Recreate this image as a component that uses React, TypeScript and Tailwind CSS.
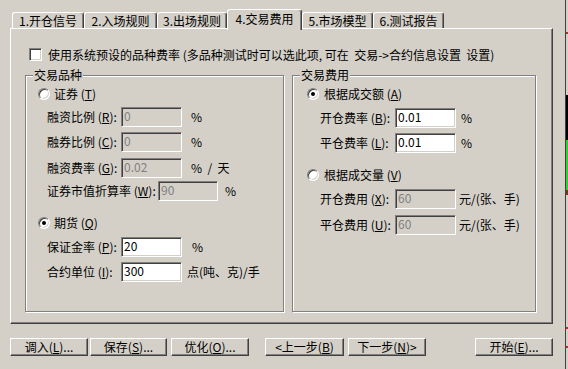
import React from "react";

const sunken =
  "border border-t-[#808080] border-l-[#808080] border-r-white border-b-white shadow-[inset_1px_1px_0_#404040,inset_-1px_-1px_0_#d4d0c8]";
const raised =
  "border border-t-white border-l-white border-r-[#404040] border-b-[#404040] shadow-[inset_-1px_-1px_0_#808080]";

function Mn({ text, k, tail = "" }: { text: string; k: string; tail?: string }) {
  return (
    <>
      {text}(<span className="underline underline-offset-[1px]">{k}</span>){tail}
    </>
  );
}

function Box({ value, disabled, w }: { value: string; disabled?: boolean; w: string }) {
  return (
    <div
      className={`${w} h-[20px] shrink-0 ${sunken} pl-[2px] pt-[1px] text-[12px] leading-[14px] ${
        disabled ? "bg-[#d4d0c8] text-[#808080]" : "bg-white text-black"
      }`}
    >
      {value}
    </div>
  );
}

function Radio({ checked }: { checked?: boolean }) {
  return (
    <div
      className={`w-[12px] h-[12px] shrink-0 rounded-full bg-white ${sunken} flex items-center justify-center`}
    >
      {checked && <div className="w-[4px] h-[4px] rounded-full bg-black" />}
    </div>
  );
}

function GroupTitle({ children }: { children: React.ReactNode }) {
  return (
    <div className="absolute -top-[8px] left-[7px] bg-[#d4d0c8] px-[1px] text-[12px] leading-[14px]">
      {children}
    </div>
  );
}

const tabs = [
  { t: "1.开仓信号", w: "w-[72px]" },
  { t: "2.入场规则", w: "w-[73px]" },
  { t: "3.出场规则", w: "w-[70px]" },
];
const tabsAfter = [
  { t: "5.市场模型", w: "w-[71px]" },
  { t: "6.测试报告", w: "w-[71px]" },
];

const tabCls =
  "h-[16px] shrink-0 flex items-center justify-center border-t border-l border-r border-t-white border-l-white border-r-[#404040] rounded-t-[3px] shadow-[inset_-1px_0_0_#808080] text-[12px] leading-none";

function Btn({ children, w, ml }: { children: React.ReactNode; w: string; ml: string }) {
  return (
    <div
      className={`${w} ${ml} h-[18px] shrink-0 ${raised} flex items-center justify-center text-[12px] leading-none`}
    >
      {children}
    </div>
  );
}

export default function App() {
  return (
    <div className="w-[568px] h-[369px] bg-[#d4d0c8] flex overflow-hidden text-black font-['Noto_Sans_CJK_SC','Noto_Sans',sans-serif]">
      <div className="w-[565px] shrink-0 flex flex-col">
        {/* Tabs */}
        <div className="mt-[9px] ml-[12px] h-[19px] flex items-end">
          {tabs.map((tab) => (
            <div key={tab.t} className={`${tab.w} ${tabCls}`}>
              {tab.t}
            </div>
          ))}
          <div className="w-[75px] h-[21px] -mb-[2px] pb-[2px] relative z-10 bg-[#d4d0c8] shrink-0 flex items-center justify-center border-t border-l border-r border-t-white border-l-white border-r-[#404040] rounded-t-[3px] shadow-[inset_-1px_0_0_#808080] text-[12px] leading-none">
            4.交易费用
          </div>
          {tabsAfter.map((tab) => (
            <div key={tab.t} className={`${tab.w} ${tabCls}`}>
              {tab.t}
            </div>
          ))}
        </div>

        {/* Panel */}
        <div className={`ml-[10px] w-[543px] h-[296px] shrink-0 ${raised} flex flex-col`}>
          <div className="mt-[19px] ml-[18px] h-[13px] flex items-center">
            <div className={`w-[13px] h-[13px] bg-white ${sunken}`} />
            <span className="ml-[6px] text-[12px] leading-none whitespace-nowrap">
              使用系统预设的品种费率 (多品种测试时可以选此项, 可在&nbsp; 交易-&gt;合约信息设置&nbsp; 设置)
            </span>
          </div>

          <div className="mt-[14px] ml-[14px] flex gap-[8px]">
            {/* 交易品种 */}
            <div className="relative w-[259px] h-[237px] border border-[#808080] shadow-[inset_1px_1px_0_#fff,1px_1px_0_#fff] flex flex-col text-[12px]">
              <GroupTitle>交易品种</GroupTitle>
              <div className="mt-[10px] ml-[12px] h-[16px] flex items-center gap-[4px]">
                <Radio />
                <span><Mn text="证券 " k="T" /></span>
              </div>
              <div className="mt-[5px] ml-[21px] h-[20px] flex items-center">
                <span className="w-[74px]"><Mn text="融资比例 " k="R" tail=":" /></span>
                <Box w="w-[61px]" value="0" disabled />
                <span className="ml-[9px]">%</span>
              </div>
              <div className="mt-[5px] ml-[21px] h-[20px] flex items-center">
                <span className="w-[74px]"><Mn text="融券比例 " k="C" tail=":" /></span>
                <Box w="w-[61px]" value="0" disabled />
                <span className="ml-[9px]">%</span>
              </div>
              <div className="mt-[6px] ml-[21px] h-[20px] flex items-center">
                <span className="w-[74px]"><Mn text="融资费率 " k="G" tail=":" /></span>
                <Box w="w-[61px]" value="0.02" disabled />
                <span className="ml-[9px] whitespace-pre">%  /  天</span>
              </div>
              <div className="mt-[3px] ml-[21px] h-[20px] flex items-center">
                <span className="w-[111px]"><Mn text="证券市值折算率 " k="W" tail=":" /></span>
                <Box w="w-[60px]" value="90" disabled />
                <span className="ml-[7px]">%</span>
              </div>
              <div className="mt-[14px] ml-[12px] h-[16px] flex items-center gap-[4px]">
                <Radio checked />
                <span><Mn text="期货 " k="Q" /></span>
              </div>
              <div className="mt-[6px] ml-[21px] h-[20px] flex items-center">
                <span className="w-[74px]"><Mn text="保证金率 " k="P" tail=":" /></span>
                <Box w="w-[61px]" value="20" />
                <span className="ml-[10px]">%</span>
              </div>
              <div className="mt-[5px] ml-[21px] h-[20px] flex items-center">
                <span className="w-[74px]"><Mn text="合约单位 " k="I" tail=":" /></span>
                <Box w="w-[61px]" value="300" />
                <span className="ml-[5px]">点(吨、克)/手</span>
              </div>
            </div>

            {/* 交易费用 */}
            <div className="relative w-[244px] h-[237px] border border-[#808080] shadow-[inset_1px_1px_0_#fff,1px_1px_0_#fff] flex flex-col text-[12px]">
              <GroupTitle>交易费用</GroupTitle>
              <div className="mt-[10px] ml-[14px] h-[16px] flex items-center gap-[5px]">
                <Radio checked />
                <span><Mn text="根据成交额 " k="A" /></span>
              </div>
              <div className="mt-[6px] ml-[27px] h-[20px] flex items-center">
                <span className="w-[75px]"><Mn text="开仓费率 " k="B" tail=":" /></span>
                <Box w="w-[61px]" value="0.01" />
                <span className="ml-[5px]">%</span>
              </div>
              <div className="mt-[5px] ml-[27px] h-[20px] flex items-center">
                <span className="w-[75px]"><Mn text="平仓费率 " k="L" tail=":" /></span>
                <Box w="w-[61px]" value="0.01" />
                <span className="ml-[5px]">%</span>
              </div>
              <div className="mt-[14px] ml-[14px] h-[16px] flex items-center gap-[5px]">
                <Radio />
                <span><Mn text="根据成交量 " k="V" /></span>
              </div>
              <div className="mt-[6px] ml-[27px] h-[20px] flex items-center">
                <span className="w-[75px]"><Mn text="开仓费用 " k="X" tail=":" /></span>
                <Box w="w-[61px]" value="60" disabled />
                <span className="ml-[3px]">元/(张、手)</span>
              </div>
              <div className="mt-[6px] ml-[27px] h-[20px] flex items-center">
                <span className="w-[75px]"><Mn text="平仓费用 " k="U" tail=":" /></span>
                <Box w="w-[61px]" value="60" disabled />
                <span className="ml-[3px]">元/(张、手)</span>
              </div>
            </div>
          </div>
        </div>

        {/* Buttons */}
        <div className="mt-[14px] ml-[10px] flex">
          <Btn w="w-[78px]" ml="ml-0"><Mn text="调入" k="L" tail="..." /></Btn>
          <Btn w="w-[77px]" ml="ml-[2px]"><Mn text="保存" k="S" tail="..." /></Btn>
          <Btn w="w-[78px]" ml="ml-[4px]"><Mn text="优化" k="O" tail="..." /></Btn>
          <Btn w="w-[79px]" ml="ml-[16px]"><Mn text="<上一步" k="B" /></Btn>
          <Btn w="w-[78px]" ml="ml-[4px]"><Mn text="下一步" k="N" tail=">" /></Btn>
          <Btn w="w-[78px]" ml="ml-[49px]"><Mn text="开始" k="E" tail="..." /></Btn>
        </div>
      </div>

      {/* edge of the window behind */}
      <div className="w-[3px] shrink-0 border-l border-[#404040] flex flex-col">
        <div className="h-[32px]" />
        <div className="h-[2px] bg-[#b03030]" />
        <div className="h-[61px]" />
        <div className="h-[45px] bg-black" />
        <div className="h-[50px] bg-[#30d030]" />
        <div className="h-[5px] bg-[#803020]" />
        <div className="h-[132px]" />
        <div className="h-[2px] bg-[#b03030]" />
        <div className="h-[17px]" />
        <div className="h-[2px] bg-[#b03030]" />
      </div>
    </div>
  );
}
